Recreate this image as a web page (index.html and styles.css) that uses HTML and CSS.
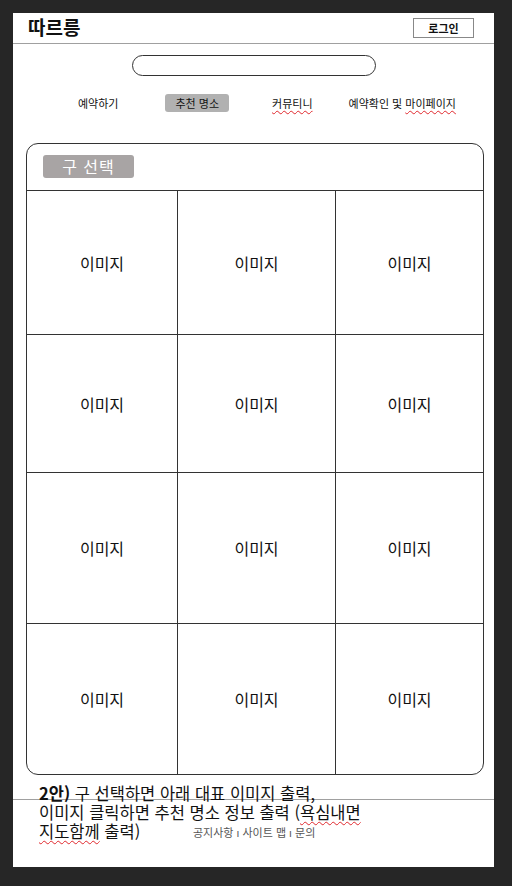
FILE: index.html
```html
<!DOCTYPE html>
<html lang="ko">
<head>
  <meta charset="UTF-8" />
  <meta name="viewport" content="width=device-width, initial-scale=1" />
  <title>따르릉 - 추천 명소</title>
  <link rel="stylesheet" href="styles.css">
</head>
<body>

  <div class="page">

    <!-- 🔹 상단 -->
    <div class="header">
      <div class="logo">따르릉</div>
      <div class="login-btn">로그인</div>
    </div>

    <div class="search"></div>

    <div class="nav">
      <div class="nav-item">예약하기</div>
      <div class="nav-item active">추천 명소</div>
      <div class="nav-item"><span class="typo">커뮤티니</span></div>
      <div class="nav-item">예약확인 및 <span class="typo">마이페이지</span></div>
    </div>

    <!-- 🔹 구 선택 + 이미지 -->
    <div class="card">
      <div class="card-head">
        <div class="gu-btn">구 선택</div>
      </div>
      <div class="grid">
        <div class="cell">이미지</div>
        <div class="cell">이미지</div>
        <div class="cell">이미지</div>
        <div class="cell">이미지</div>
        <div class="cell">이미지</div>
        <div class="cell">이미지</div>
        <div class="cell">이미지</div>
        <div class="cell">이미지</div>
        <div class="cell">이미지</div>
        <div class="cell">이미지</div>
        <div class="cell">이미지</div>
        <div class="cell">이미지</div>
      </div>
    </div>

    <!-- 🔹 하단 -->
    <div class="footer">
      <div class="links">공지사항 ı 사이트 맵 ı 문의</div>
    </div>

    <div class="note">
      <b>2안)</b> 구 선택하면 아래 대표 이미지 출력,<br>
      이미지 클릭하면 추천 명소 정보 출력 (<span class="typo">욕심내면</span><br>
      <span class="typo">지도함께</span> 출력)
    </div>

  </div>

</body>
</html>
```

FILE: styles.css
```css
body {
  margin: 0;
  background: #262626;
  font-family: 'Noto Sans CJK KR', 'Noto Sans', sans-serif;
  color: #111;
}

.page {
  position: relative;
  margin: 13px 0 0 13px;
  width: 481px;
  height: 854px;
  background: #ffffff;
}

.header {
  height: 30px;
  border-bottom: 1px solid #a0a0a0;
  display: flex;
  justify-content: space-between;
  align-items: flex-start;
  padding: 0 20px 0 15px;
}

.logo {
  font-size: 19px;
  font-weight: bold;
  line-height: 27px;
}

.login-btn {
  margin-top: 5px;
  width: 59px;
  height: 18px;
  border: 1px solid #888;
  font-size: 11px;
  font-weight: bold;
  line-height: 18px;
  text-align: center;
}

.search {
  margin: 11px 0 0 119px;
  width: 242px;
  height: 19px;
  border: 1.5px solid #333;
  border-radius: 12px;
}

.nav {
  display: flex;
  align-items: center;
  margin-top: 18px;
  padding-left: 65px;
  font-size: 11px;
  height: 18px;
}

.nav-item:nth-child(2) { margin-left: 47px; }
.nav-item:nth-child(3) { margin-left: 43px; }
.nav-item:nth-child(4) { margin-left: 36px; }

.nav-item.active {
  background: #b1b1b1;
  border-radius: 3px;
  padding: 0 10px;
  line-height: 18px;
}

.typo {
  text-decoration: underline wavy #e0282d;
  text-decoration-thickness: 1px;
  text-underline-offset: 2px;
}

.card {
  margin: 31px 0 0 13px;
  width: 456px;
  border: 1px solid #333;
  border-radius: 12px;
  overflow: hidden;
}

.card-head {
  height: 47px;
  border-bottom: 1px solid #333;
  padding: 11px 0 0 16px;
  box-sizing: border-box;
}

.gu-btn {
  width: 91px;
  height: 23px;
  background: #a8a4a4;
  border-radius: 3px;
  color: #ffffff;
  font-size: 16px;
  line-height: 23px;
  text-align: center;
  letter-spacing: 1px;
}

.grid {
  display: grid;
  grid-template-columns: 151px 158px 147px;
  grid-template-rows: 144px 138px 151px 150px;
}

.cell {
  display: flex;
  justify-content: center;
  align-items: center;
  font-size: 16px;
  border-right: 1px solid #333;
  border-bottom: 1px solid #333;
}

.cell:nth-child(3n) { border-right: none; }
.cell:nth-last-child(-n+3) { border-bottom: none; }

.footer {
  margin-top: 24px;
  border-top: 1px solid #a0a0a0;
}

.links {
  margin: 24px 0 0 180px;
  font-size: 11px;
  color: #555;
}

/* 메모 (와이어프레임 위 설명) */
.note {
  position: absolute;
  left: 26px;
  top: 771px;
  font-size: 16.5px;
  line-height: 19px;
  color: #111;
}
```
